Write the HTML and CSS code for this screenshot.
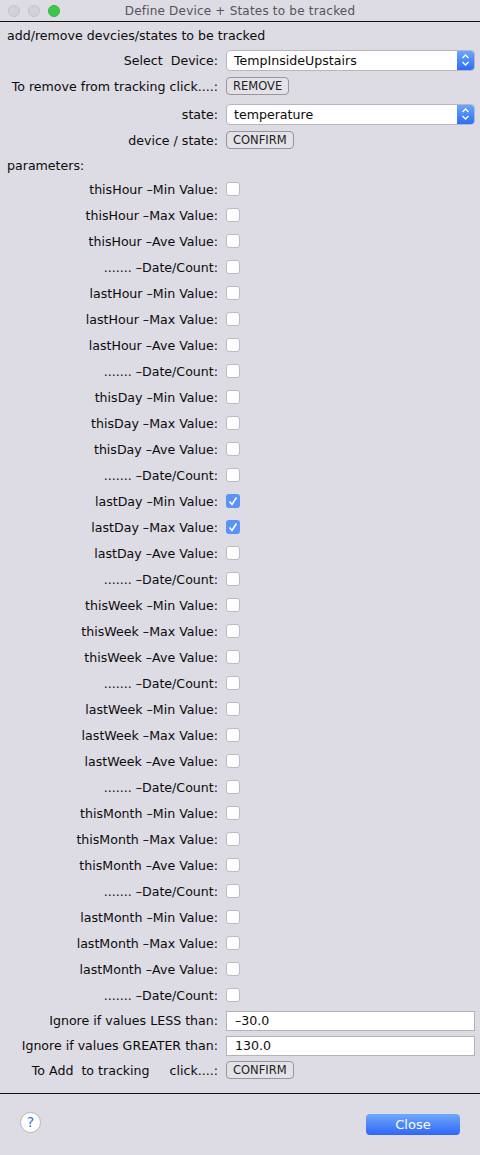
FILE: index.html
```html
<!DOCTYPE html>
<html lang="en">
<head>
    <meta charset="UTF-8">
    <title>Define Device + States to be tracked</title>
    <link rel="stylesheet" href="styles.css">
</head>
<body>
    <div class="window">
        <div class="titlebar">
            <div class="lights">
                <span class="light"></span>
                <span class="light"></span>
                <span class="light light-green"></span>
            </div>
            <div class="title">Define Device + States to be tracked</div>
        </div>

        <div class="content">
            <div class="heading">add/remove devcies/states to be tracked</div>

            <div class="row row-popup">
                <div class="label">Select&nbsp; Device:</div>
                <div class="popup">
                    <span class="popup-text">TempInsideUpstairs</span>
                    <span class="popup-arrows"><svg width="9" height="14" viewBox="0 0 9 14"><path d="M1.5 5 4.5 2 7.5 5M1.5 9 4.5 12 7.5 9" fill="none" stroke="#fff" stroke-width="1.4"/></svg></span>
                </div>
            </div>
            <div class="row row-remove">
                <div class="label">To remove from tracking click....:</div>
                <button class="btn">REMOVE</button>
            </div>
            <div class="row row-popup row-state">
                <div class="label">state:</div>
                <div class="popup">
                    <span class="popup-text">temperature</span>
                    <span class="popup-arrows"><svg width="9" height="14" viewBox="0 0 9 14"><path d="M1.5 5 4.5 2 7.5 5M1.5 9 4.5 12 7.5 9" fill="none" stroke="#fff" stroke-width="1.4"/></svg></span>
                </div>
            </div>
            <div class="row row-confirm">
                <div class="label">device / state:</div>
                <button class="btn">CONFIRM</button>
            </div>

            <div class="heading heading-params">parameters:</div>

            <div class="params">
                <div class="row"><div class="label">thisHour –Min Value:</div><span class="check"></span></div>
                <div class="row"><div class="label">thisHour –Max Value:</div><span class="check"></span></div>
                <div class="row"><div class="label">thisHour –Ave Value:</div><span class="check"></span></div>
                <div class="row"><div class="label">....... –Date/Count:</div><span class="check"></span></div>
                <div class="row"><div class="label">lastHour –Min Value:</div><span class="check"></span></div>
                <div class="row"><div class="label">lastHour –Max Value:</div><span class="check"></span></div>
                <div class="row"><div class="label">lastHour –Ave Value:</div><span class="check"></span></div>
                <div class="row"><div class="label">....... –Date/Count:</div><span class="check"></span></div>
                <div class="row"><div class="label">thisDay –Min Value:</div><span class="check"></span></div>
                <div class="row"><div class="label">thisDay –Max Value:</div><span class="check"></span></div>
                <div class="row"><div class="label">thisDay –Ave Value:</div><span class="check"></span></div>
                <div class="row"><div class="label">....... –Date/Count:</div><span class="check"></span></div>
                <div class="row"><div class="label">lastDay –Min Value:</div><span class="check checked"><svg width="14" height="14" viewBox="0 0 14 14"><path d="M3.5 7.5 6 10.5 10.5 3.5" fill="none" stroke="#fff" stroke-width="1.6"/></svg></span></div>
                <div class="row"><div class="label">lastDay –Max Value:</div><span class="check checked"><svg width="14" height="14" viewBox="0 0 14 14"><path d="M3.5 7.5 6 10.5 10.5 3.5" fill="none" stroke="#fff" stroke-width="1.6"/></svg></span></div>
                <div class="row"><div class="label">lastDay –Ave Value:</div><span class="check"></span></div>
                <div class="row"><div class="label">....... –Date/Count:</div><span class="check"></span></div>
                <div class="row"><div class="label">thisWeek –Min Value:</div><span class="check"></span></div>
                <div class="row"><div class="label">thisWeek –Max Value:</div><span class="check"></span></div>
                <div class="row"><div class="label">thisWeek –Ave Value:</div><span class="check"></span></div>
                <div class="row"><div class="label">....... –Date/Count:</div><span class="check"></span></div>
                <div class="row"><div class="label">lastWeek –Min Value:</div><span class="check"></span></div>
                <div class="row"><div class="label">lastWeek –Max Value:</div><span class="check"></span></div>
                <div class="row"><div class="label">lastWeek –Ave Value:</div><span class="check"></span></div>
                <div class="row"><div class="label">....... –Date/Count:</div><span class="check"></span></div>
                <div class="row"><div class="label">thisMonth –Min Value:</div><span class="check"></span></div>
                <div class="row"><div class="label">thisMonth –Max Value:</div><span class="check"></span></div>
                <div class="row"><div class="label">thisMonth –Ave Value:</div><span class="check"></span></div>
                <div class="row"><div class="label">....... –Date/Count:</div><span class="check"></span></div>
                <div class="row"><div class="label">lastMonth –Min Value:</div><span class="check"></span></div>
                <div class="row"><div class="label">lastMonth –Max Value:</div><span class="check"></span></div>
                <div class="row"><div class="label">lastMonth –Ave Value:</div><span class="check"></span></div>
                <div class="row"><div class="label">....... –Date/Count:</div><span class="check"></span></div>
            </div>

            <div class="row row-input">
                <div class="label">Ignore if values LESS than:</div>
                <div class="input">–30.0</div>
            </div>
            <div class="row row-input">
                <div class="label">Ignore if values GREATER than:</div>
                <div class="input">130.0</div>
            </div>
            <div class="row row-add">
                <div class="label">To Add&nbsp; to tracking &nbsp; &nbsp; click....:</div>
                <button class="btn">CONFIRM</button>
            </div>
        </div>

        <div class="footer">
            <span class="help">?</span>
            <button class="close-btn">Close</button>
        </div>
    </div>
</body>
</html>
```

FILE: styles.css
```css
/* Base styling */
body {
    margin: 0;
    padding: 0;
    background-color: #dddbe3;
    color: #0c0c0c;
    font-family: 'DejaVu Sans', sans-serif;
    font-size: 12.6px;
}

.window {
    width: 480px;
    height: 1155px;
    background-color: #dddbe3;
    overflow: hidden;
}

/* Title bar */
.titlebar {
    display: flex;
    align-items: center;
    height: 21px;
    border-bottom: 1px solid #111;
}

.lights {
    display: flex;
    gap: 8px;
    width: 60px;
    padding-left: 8px;
    box-sizing: border-box;
}

.light {
    width: 12px;
    height: 12px;
    border-radius: 50%;
    box-sizing: border-box;
    background-color: #d3d1d6;
    border: 1px solid #c4c2c8;
}

.light-green {
    background-color: #3cc84a;
    border-color: #35b843;
}

.title {
    width: 360px;
    text-align: center;
    font-size: 12px;
    color: #55535a;
    letter-spacing: 0.2px;
}

/* Form */
.content {
    padding-top: 2px;
    height: 1072px;
    box-sizing: border-box;
    border-bottom: 1px solid #111;
}

.heading {
    height: 24px;
    line-height: 24px;
    padding-left: 7px;
}

.heading-params {
    line-height: 28px;
}

.row {
    display: flex;
    align-items: center;
    height: 26px;
}

.label {
    width: 218px;
    margin-right: 8px;
    text-align: right;
    white-space: nowrap;
    flex-shrink: 0;
}

.row-popup {
    height: 24px;
}

.row-remove {
    height: 28px;
}

.row-state {
    height: 28px;
}

.row-confirm {
    height: 24px;
}

.popup {
    display: flex;
    width: 249px;
    height: 21px;
    box-sizing: border-box;
    background-color: #fff;
    border: 1px solid #b8b6bc;
    border-radius: 4px;
    overflow: hidden;
}

.popup-text {
    flex: 1;
    padding-left: 7px;
    line-height: 19px;
}

.popup-arrows {
    display: flex;
    align-items: center;
    justify-content: center;
    width: 17px;
    background: linear-gradient(#6ba6fb, #2f6cf6);
}

.btn {
    height: 18px;
    padding: 0 6px;
    background-color: #e4e2e8;
    color: #222;
    font-family: 'DejaVu Sans', sans-serif;
    font-size: 11.5px;
    border: 1px solid #98969c;
    border-radius: 4px;
}

.check {
    display: flex;
    width: 14px;
    height: 14px;
    box-sizing: border-box;
    background-color: #fff;
    border: 1px solid #bdbbc1;
    border-radius: 3px;
}

.checked {
    background-color: #5a92f7;
    border: none;
}

.row-input {
    height: 25px;
}

.input {
    width: 249px;
    height: 20px;
    line-height: 18px;
    box-sizing: border-box;
    padding-left: 8px;
    background-color: #fff;
    border: 1px solid #b4b2b8;
}

.row-add {
    height: 24px;
}

/* Footer */
.footer {
    display: flex;
    align-items: center;
    justify-content: space-between;
    height: 61px;
    padding: 0 20px;
}

.help {
    width: 21px;
    height: 21px;
    line-height: 19px;
    margin-bottom: 5px;
    box-sizing: border-box;
    text-align: center;
    color: #3a6fe0;
    font-size: 14px;
    background-color: #fff;
    border: 1px solid #b8b6bc;
    border-radius: 50%;
}

.close-btn {
    width: 94px;
    height: 21px;
    padding: 0;
    color: #fff;
    font-family: 'DejaVu Sans', sans-serif;
    font-size: 13px;
    background: linear-gradient(#6fa8fb, #2f66f8);
    border: none;
    border-radius: 4px;
}
```
